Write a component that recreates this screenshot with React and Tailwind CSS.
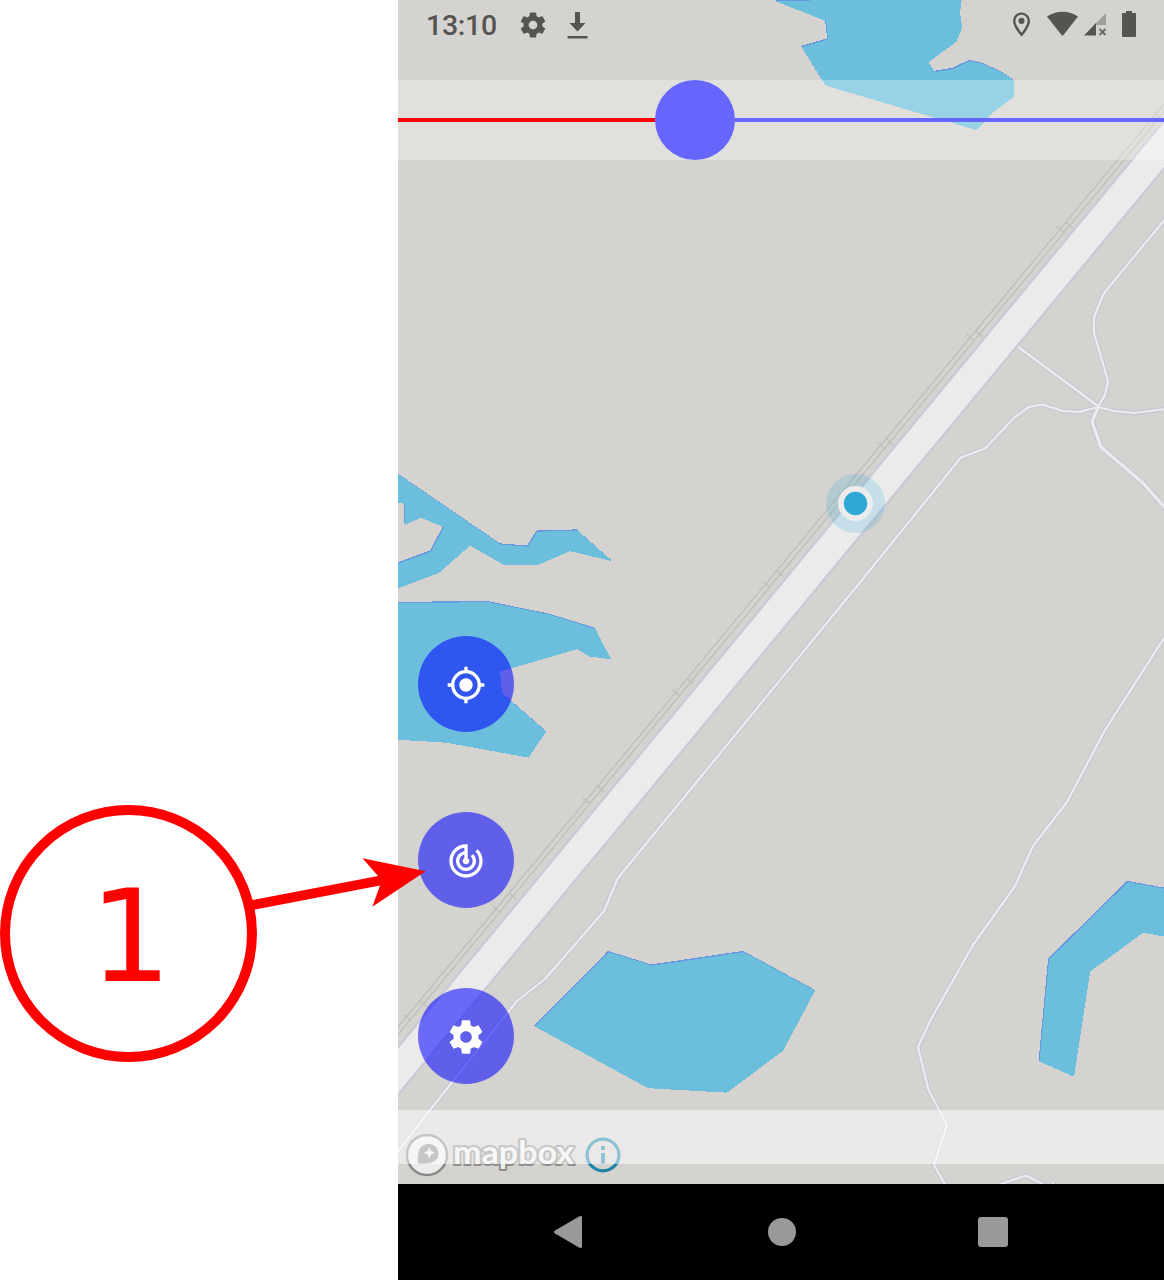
import { MdMyLocation, MdTrackChanges, MdOutlineLocationOn } from "react-icons/md";

const WATER = [
  "774,0 826,20.500 828,39 802,46.500 823,81 826,85 976.500,129.500 992,112.500 1014,96 1014,80 1001,71.500 982,63 970,60.500 953,68.500 935,71.500 928.500,61.500 956.500,41 962,27 960,12 961.500,-1",
  "397,473 501,544 528,546 537.500,531 577.500,530 612,560.500 570,550.500 538.500,564 503.500,564 470,545 438.500,572.500 397,588 397,563.500 431,551 444,526.500 420.500,517 404.500,524.500 404.500,503 397,502",
  "397,602.500 488,601.500 549,614 595,628 611,658.500 589.500,656 577,648.500 500,671 502,692.500 546,731 528.500,757 446,742 397,739",
  "535,1026 609,951.500 652,965 744,951.500 815,990 783,1050 727,1092 648,1087.500",
  "1128,881.500 1170,889 1170,937 1143,932 1090,971 1074,1076 1039.500,1061 1049,959",
];

const PATHS = [
  "1166,218 1104,293 1094,317 1094,333 1108,381 1105,395 1098,407",
  "1017,346 1098,406",
  "1166,409 1134,413 1114,411 1098,407 1079,412 1063,411 1042,404.500 1029,407 1015,417 985,448.500 961,457.500 862,580 618,878 604,911 545,979 517,1001 430,1110 396,1154",
  "1166,635 1105,730 1067,802 1033,846 1015,886 973,945 930,1021 918,1047 928.500,1090 947,1125 934,1165 946,1186",
  "998,1185 1026,1175.500 1046,1186",
  "1053,1182 1053,1186",
];
const TRACK = "1098,407 1092,422 1101,447 1143,483 1167,510";

// Railway ties: x, y of the outer rail's tie, then the offset of the inner rail's tie.
const TICKS = [
  [1151, 120, 6, -5],
  [1060, 229, 9, -4],
  [970, 337, 9.5, -3],
  [881, 445.5, 9.2, -3.5],
  [766, 584.5, 14, -11],
  [676, 692.5, 14, -11.5],
  [586.5, 801, 14.5, -12],
  [496.5, 909, 16, -13],
  [407, 1017.5, 16.5, -13.5],
];

const GEAR =
  "M19.43 12.98c.04-.32.07-.64.07-.98s-.03-.66-.07-.98l2.11-1.65c.19-.15.24-.42.12-.64l-2-3.46c-.12-.22-.39-.3-.61-.22l-2.49 1c-.52-.4-1.08-.73-1.69-.98l-.38-2.65A.488.488 0 0014 2h-4c-.25 0-.46.18-.49.42l-.38 2.65c-.61.25-1.17.59-1.69.98l-2.49-1c-.23-.09-.49 0-.61.22l-2 3.46c-.13.22-.07.49.12.64l2.11 1.65c-.04.32-.07.65-.07.98s.03.66.07.98l-2.11 1.65c-.19.15-.24.42-.12.64l2 3.46c.12.22.39.3.61.22l2.49-1c.52.4 1.08.73 1.69.98l.38 2.65c.03.24.24.42.49.42h4c.25 0 .46-.18.49-.42l.38-2.65c.61-.25 1.17-.59 1.69-.98l2.49 1c.23.09.49 0 .61-.22l2-3.46c.12-.22.07-.49-.12-.64l-2.11-1.65zM12 15.5c-1.93 0-3.5-1.57-3.5-3.5s1.57-3.5 3.5-3.5 3.5 1.57 3.5 3.5-1.57 3.5-3.5 3.5z";

function Gear({ className }) {
  return (
    <svg viewBox="0 0 24 24" className={className} fill="currentColor">
      <path d={GEAR} />
    </svg>
  );
}

function MapCanvas() {
  return (
    <svg viewBox="398 0 766 1184" className="absolute inset-0 h-[1184px] w-[766px]" fill="none">
      {WATER.map((p) => (
        <g key={p} shapeRendering="crispEdges">
          <polygon points={p} fill="#6899df" transform="translate(-0.9 -0.6)" />
          <polygon points={p} fill="#6bbfdd" transform="translate(0.1 0.7)" />
        </g>
      ))}
      <g strokeLinejoin="round">
        {PATHS.map((p) => (
          <polyline key={p} points={p} stroke="#c9c9d5" strokeWidth="4.800" />
        ))}
        <polyline points={TRACK} stroke="#c9c9d5" strokeWidth="5.800" />
        {PATHS.map((p) => (
          <polyline key={p} points={p} stroke="#ececee" strokeWidth="2.200" />
        ))}
        <polyline points={TRACK} stroke="#ececee" strokeWidth="3.200" />
      </g>
      <path d="M1201 100L304.500 1184" stroke="#c9c9d8" strokeWidth="32.600" />
      <path d="M1201 100L304.500 1184" stroke="#ebebeb" strokeWidth="28" />
      <g stroke="#bfbeba" strokeWidth="1.300">
        <path d="M1166 101.500L396 1029.500M1166 109.500L396 1037" />
        {TICKS.map(([x, y, dx, dy]) => (
          <path key={x} d={`M${x - 3.5} ${y - 3}l7 6M${x + dx - 3.5} ${y + dy - 3}l7 6`} />
        ))}
      </g>
      <circle cx="855.500" cy="503.500" r="29.500" fill="#30a8d6" fillOpacity="0.2" />
      <circle cx="855.500" cy="503.500" r="17.500" fill="#ececec" />
      <circle cx="855.500" cy="503.500" r="11.700" fill="#30a8d6" />
    </svg>
  );
}

function StatusBar() {
  return (
    <header className="relative flex h-20 items-start justify-between pr-[28px] pl-[28px] text-[#555450]">
      <div className="flex h-[49px] items-center">
        <span className="w-[92px] shrink-0 pt-[3px] font-[Roboto,sans-serif] text-[28.5px] leading-none font-medium tracking-[-0.3px]">
          13:10
        </span>
        <Gear className="h-[30px] w-[30px]" />
        <svg viewBox="0 0 22 28" className="ml-[17.500px] h-[28px] w-[22px]" fill="currentColor">
          <path d="M9 1h5v11h5.500L11.500 20.500 3.500 12H9zM1.500 25h20v2.500h-20z" />
        </svg>
      </div>
      <div className="flex h-[48px] items-center">
        <MdOutlineLocationOn className="h-[29px] w-[29px]" />
        <svg viewBox="0 0 32 26" className="ml-[11px] h-[26px] w-[32px]" fill="currentColor">
          <path d="M0 5.500C9-1 22-1 31 5.500L16.500 24q-1 1-2 0z" />
        </svg>
        <svg viewBox="0 0 24 24" className="ml-[4px] h-6 w-6">
          <path d="M23 1v12H11z" fill="#a19f9c" />
          <path d="M13 11v12.500H1z" fill="#555450" />
          <path d="M16.500 17l6 6M22.500 17l-6 6" stroke="#6b6a67" strokeWidth="2" />
        </svg>
        <svg viewBox="0 0 14 26" className="ml-[15px] h-[26px] w-[14px]" fill="currentColor">
          <path d="M4 0h6v2h3q1 0 1 1v22q0 1-1 1H1q-1 0-1-1V3q0-1 1-1h3z" />
        </svg>
      </div>
    </header>
  );
}

function Slider() {
  return (
    <div className="relative flex h-20 items-center bg-white/30">
      <div className="h-1 w-[257px] bg-[#ff0000]" />
      <div className="h-20 w-20 rounded-full bg-[#6666ff]" />
      <div className="h-1 flex-1 bg-[#6666ff]" />
    </div>
  );
}

function RoundButton({ label, children }) {
  return (
    <button
      aria-label={label}
      className="flex h-24 w-24 items-center justify-center rounded-full bg-[#0000ff]/55 pt-[2px] text-white"
    >
      {children}
    </button>
  );
}

function Attribution() {
  return (
    <svg viewBox="398 1130 240 54" className="absolute bottom-0 left-0 h-[54px] w-[240px]">
      <circle cx="427" cy="1155" r="19.500" fill="#ececec" />
      <circle cx="427" cy="1155" r="20" fill="none" stroke="#8b8986" strokeWidth="2.400" />
      <path
        d="M418 1163.500C417 1153 419 1144 429 1144c5 0 9.500 4 9.500 9.500 0 9-10 11-20.500 10z"
        fill="#8f8e8c"
      />
      <path d="M429.300 1147l1.700 4 4 1.700-4 1.700-1.700 4-1.700-4-4-1.700 4-1.700z" fill="#ececec" />
      <text
        x="453"
        y="1163.500"
        textLength="121"
        lengthAdjust="spacingAndGlyphs"
        className="font-['Lato',sans-serif] text-[32px] font-bold"
        fill="#ececec"
        stroke="#8f8e8b"
        strokeWidth="4"
        strokeLinejoin="round"
        paintOrder="stroke"
      >
        mapbox
      </text>
      <g fill="none" stroke="#1b83a6">
        <circle cx="603" cy="1155" r="15.900" strokeWidth="3.200" />
        <path d="M603 1153v10.500M603 1146v4" strokeWidth="3.800" />
      </g>
    </svg>
  );
}

function NavBar() {
  return (
    <nav className="flex h-24 items-center bg-black text-[#999999]">
      <svg viewBox="0 0 30 34" className="ml-[155px] h-[34px] w-[30px]" fill="currentColor">
        <path d="M2 15.500L26.500 1.300Q29 .5 29 2.500v29q0 2-2.500 1.200L2 18.500q-2-1.500 0-3z" />
      </svg>
      <div className="ml-[185px] h-7 w-7 rounded-full bg-[#999999]" />
      <div className="ml-[182px] h-[30px] w-[30px] rounded-[3px] bg-[#999999]" />
    </nav>
  );
}

export default function App() {
  return (
    <main className="relative flex h-[1280px] w-[1164px] overflow-hidden bg-white">
      <aside className="w-[398px] pt-[805px]">
        <div className="flex h-[257px] w-[257px] items-center justify-center rounded-full border-[10px] border-[#ff0000]">
          <span className="pt-[5px] pl-[4px] font-['DejaVu_Sans',sans-serif] text-[129px] leading-[129px] text-[#ff0000]">1</span>
        </div>
      </aside>
      <section className="w-[766px]">
        <div className="relative flex h-[1184px] flex-col bg-[#d5d3cf]">
          <MapCanvas />
          <Attribution />
          <StatusBar />
          <Slider />
          <div className="relative flex flex-1 flex-col justify-end gap-20 pb-[26px] pl-5">
            <RoundButton label="My location">
              <MdMyLocation className="h-10 w-10" />
            </RoundButton>
            <RoundButton label="Track">
              <MdTrackChanges className="h-10 w-10" />
            </RoundButton>
            <RoundButton label="Settings">
              <Gear className="h-10 w-10" />
            </RoundButton>
          </div>
          <div className="relative mb-5 h-[54px] bg-white/50" />
        </div>
        <NavBar />
      </section>
      <svg viewBox="0 0 180 56" className="absolute top-[855px] left-[250px] h-[56px] w-[180px]" fill="#ff0000">
        <path d="M1 45.200L128 21 112.500 3.300 175.700 16.300 122.300 51.700 130 30.500 3 54.900z" />
      </svg>
    </main>
  );
}
